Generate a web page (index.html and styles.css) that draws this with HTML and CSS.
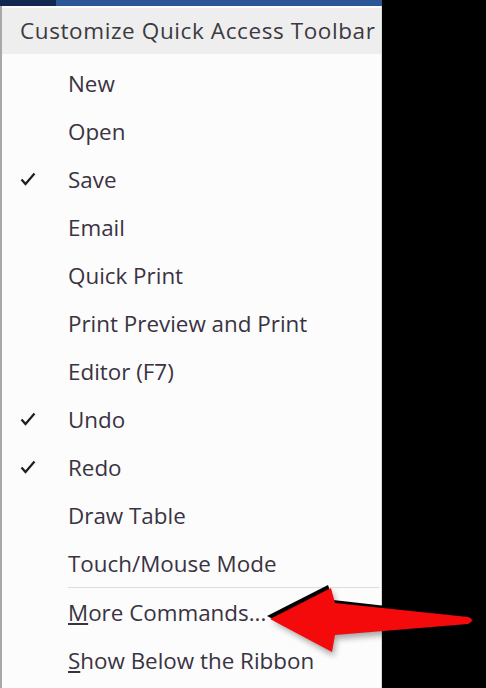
FILE: index.html
```html
<!DOCTYPE html>
<html lang="en">
<head>
  <meta charset="UTF-8" />
  <title>Customize Quick Access Toolbar</title>
  <link rel="stylesheet" href="styles.css">
</head>
<body>
  <div class="topbar"><span class="tab"></span></div>
  <div class="menu">
    <div class="header">Customize Quick Access Toolbar</div>
    <ul class="items">
      <li><span class="check"></span>New</li>
      <li><span class="check"></span>Open</li>
      <li><span class="check"><svg width="16" height="14" viewBox="0 0 16 14"><path d="M1.5 7.5 L5.5 12 L14.5 1.5" fill="none" stroke="#1e1e22" stroke-width="2.2" /></svg></span>Save</li>
      <li><span class="check"></span>Email</li>
      <li><span class="check"></span>Quick Print</li>
      <li><span class="check"></span>Print Preview and Print</li>
      <li><span class="check"></span>Editor (F7)</li>
      <li><span class="check"><svg width="16" height="14" viewBox="0 0 16 14"><path d="M1.5 7.5 L5.5 12 L14.5 1.5" fill="none" stroke="#1e1e22" stroke-width="2.2" /></svg></span>Undo</li>
      <li><span class="check"><svg width="16" height="14" viewBox="0 0 16 14"><path d="M1.5 7.5 L5.5 12 L14.5 1.5" fill="none" stroke="#1e1e22" stroke-width="2.2" /></svg></span>Redo</li>
      <li><span class="check"></span>Draw Table</li>
      <li><span class="check"></span>Touch/Mouse Mode</li>
      <li class="sep"></li>
      <li><span class="check"></span><u>M</u>ore Commands...</li>
      <li><span class="check"></span><u>S</u>how Below the Ribbon</li>
    </ul>
  </div>

  <svg class="arrow" width="220" height="80" viewBox="260 580 220 80">
    <defs>
      <filter id="soft" x="-20%" y="-40%" width="140%" height="180%">
        <feGaussianBlur stdDeviation="3" />
      </filter>
    </defs>
    <path d="M273 622 L333 592 L336 607 L468 622 Q476 624 468 628 L336 639 L334 656 Z" fill="#000" opacity="0.35" filter="url(#soft)" />
    <path d="M267 616 L328 585 L333 600 L466 615 Q474 617 466 621 L333 630 L330 648 Z" fill="#000" />
    <path d="M270 619 L331 588 L335 603 L468 617 Q476 620 468 624 L335 635 L332 652 Z" fill="#f40a0a" />
  </svg>
</body>
</html>
```

FILE: styles.css
```css
body {
  margin: 0;
  width: 486px;
  height: 688px;
  overflow: hidden;
  background: #000;
  font-family: "Open Sans", "Noto Sans", sans-serif;
  position: relative;
}
.topbar {
  width: 382px;
  height: 6px;
  background: #2b5797;
  display: flex;
}
.tab {
  width: 56px;
  background: #13284f;
}
.menu {
  width: 382px;
  height: 682px;
  background: #fcfcfd;
  border-left: 2px solid #a8a8ac;
  border-right: 1px solid #d8d8d8;
  padding-top: 2px;
  box-sizing: border-box;
}
.header {
  height: 46px;
  line-height: 46px;
  background: #eeeeef;
  color: #3c3a40;
  font-size: 22.5px;
  letter-spacing: 0.6px;
  padding-left: 18px;
  white-space: nowrap;
}
.items {
  list-style: none;
  margin: 0;
  padding: 5px 0 0;
}
.items li {
  height: 48px;
  display: flex;
  align-items: center;
  font-size: 22.4px;
  color: #3a3341;
  white-space: nowrap;
}
.check {
  width: 66px;
  padding-left: 18px;
  box-sizing: border-box;
  display: flex;
  align-items: center;
}
.items li.sep {
  height: 1px;
  margin: 0 2px 0 66px;
  background: #dcdcdc;
}
.arrow {
  position: absolute;
  left: 260px;
  top: 580px;
}
```
